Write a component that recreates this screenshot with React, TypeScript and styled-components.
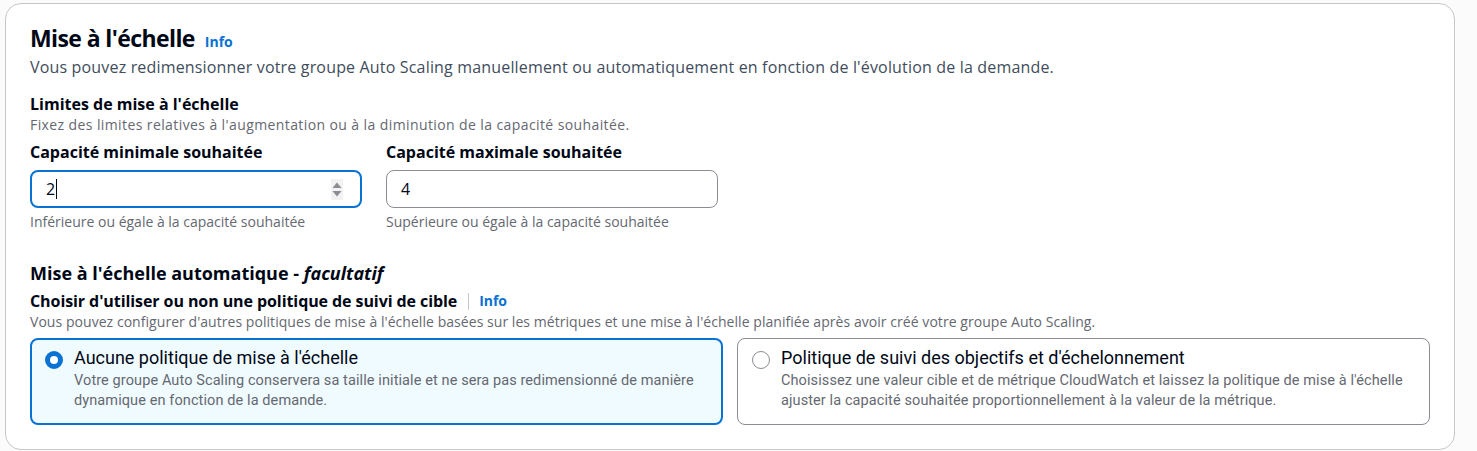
import React from "react";
import styled, { createGlobalStyle } from "styled-components";

const Global = createGlobalStyle`
  html, body { margin: 0; padding: 0; background: #fbfbfb; }
  body { font-family: "Open Sans", "Noto Sans", sans-serif; color: #000716; }
  * { box-sizing: border-box; }
`;

const Page = styled.div`
  padding: 3px 22px 0 5px;
`;

const Card = styled.section`
  background: #ffffff;
  border: 1px solid #c6c6cd;
  border-radius: 16px;
  height: 447px;
  padding: 19px 24px 0 24px;
`;

const TitleRow = styled.div`
  display: flex;
  align-items: baseline;
  gap: 10px;
`;

const Title = styled.h2`
  margin: 0;
  font-size: 23px;
  line-height: 30px;
  font-weight: 700;
  letter-spacing: -0.6px;
`;

const InfoLink = styled.a`
  color: #0972d3;
  font-size: 14px;
  font-weight: 700;
  text-decoration: none;
`;

const Lead = styled.p`
  margin: 3px 0 0;
  font-size: 16px;
  line-height: 22px;
  letter-spacing: 0.17px;
  color: #414d5c;
`;

const Label = styled.div<{ $size?: number; $top?: number; $ls?: number }>`
  font-size: ${(p) => p.$size ?? 16}px;
  line-height: ${(p) => ((p.$size ?? 16) > 16 ? 24 : 22)}px;
  margin-top: ${(p) => p.$top ?? 0}px;
  letter-spacing: ${(p) => p.$ls ?? 0}px;
  font-weight: 700;
  display: flex;
  align-items: center;
`;

const Desc = styled.div<{ $ls?: number }>`
  font-size: 14px;
  line-height: 20px;
  letter-spacing: ${(p) => p.$ls ?? 0}px;
  color: #656871;
`;

const Section = styled.div<{ $top: number }>`
  margin-top: ${(p) => p.$top}px;
`;

const Fields = styled.div`
  display: grid;
  grid-template-columns: 332px 332px;
  gap: 24px;
  margin-top: 6px;
`;

const Field = styled.div`
  display: flex;
  flex-direction: column;
`;

const InputBox = styled.div<{ $focused?: boolean }>`
  margin-top: 7px;
  height: 38px;
  border-radius: 8px;
  border: ${(p) => (p.$focused ? "2px solid #0972d3" : "1px solid #8c8c94")};
  padding: 0 ${(p) => (p.$focused ? 17 : 18)}px 0 14px;
  display: flex;
  align-items: center;
  font-size: 16px;
  background: #fff;
`;

const Value = styled.span`
  flex: 1;
  display: flex;
  align-items: center;
`;

const Caret = styled.span`
  display: inline-block;
  width: 1px;
  height: 20px;
  background: #000716;
  margin-left: 1px;
`;

const Spinner = styled.span`
  width: 12px;
  height: 21px;
  background: #f2f2f2;
  display: flex;
  align-items: center;
  justify-content: center;
`;

const Hint = styled.div`
  margin-top: 4px;
  font-size: 14px;
  line-height: 20px;
  color: #656871;
`;

const Divider = styled.span`
  display: inline-block;
  width: 1px;
  height: 17px;
  background: #c6c6cd;
  margin: 0 10px 0 11px;
`;

const Italic = styled.i`
  font-weight: 700;
`;

const Options = styled.div`
  display: grid;
  grid-template-columns: 1fr 1fr;
  gap: 14px;
  margin-top: 6px;
`;

const Option = styled.label<{ $checked?: boolean }>`
  display: flex;
  gap: 11px;
  height: 87px;
  border-radius: 8px;
  border: ${(p) => (p.$checked ? "2px solid #0972d3" : "1px solid #8c8c94")};
  background: ${(p) => (p.$checked ? "#f0fbff" : "#fff")};
  padding: ${(p) => (p.$checked ? "7px 13px" : "8px 14px")};
  font-family: Roboto, "Noto Sans", sans-serif;
`;

const Radio = styled.span<{ $checked?: boolean }>`
  flex: none;
  width: 18px;
  height: 18px;
  margin-top: 4px;
  border-radius: 50%;
  border: ${(p) => (p.$checked ? "5px solid #0972d3" : "1.5px solid #8c8c94")};
  background: #fff;
`;

const OptionText = styled.div`
  display: flex;
  flex-direction: column;
`;

const OptionTitle = styled.div`
  font-size: 18px;
  line-height: 22px;
  color: #000716;
`;

const OptionDesc = styled.div`
  margin-top: 2px;
  font-size: 14.5px;
  line-height: 20px;
  letter-spacing: 0.1px;
  color: #656871;
`;

export default function App() {
  return (
    <>
      <Global />
      <Page>
        <Card>
          <TitleRow>
            <Title>Mise à l'échelle</Title>
            <InfoLink href="#">Info</InfoLink>
          </TitleRow>
          <Lead>
            Vous pouvez redimensionner votre groupe Auto Scaling manuellement ou automatiquement en fonction de
            l'évolution de la demande.
          </Lead>

          <Section $top={15}>
            <Label>Limites de mise à l'échelle</Label>
            <Desc $ls={0.4}>
              Fixez des limites relatives à l'augmentation ou à la diminution de la capacité souhaitée.
            </Desc>
            <Fields>
              <Field>
                <Label>Capacité minimale souhaitée</Label>
                <InputBox $focused>
                  <Value>
                    2<Caret />
                  </Value>
                  <Spinner>
                    <svg width="10" height="19" viewBox="0 0 10 19">
                      <path d="M5 2.5 L9.5 8 L0.5 8 Z" fill="#8c8c94" />
                      <path d="M0.5 11 L9.5 11 L5 16.5 Z" fill="#8c8c94" />
                    </svg>
                  </Spinner>
                </InputBox>
                <Hint>Inférieure ou égale à la capacité souhaitée</Hint>
              </Field>
              <Field>
                <Label>Capacité maximale souhaitée</Label>
                <InputBox>
                  <Value>4</Value>
                </InputBox>
                <Hint>Supérieure ou égale à la capacité souhaitée</Hint>
              </Field>
            </Fields>
          </Section>

          <Section $top={29}>
            <Label $size={18}>
              Mise à l'échelle automatique -&nbsp;<Italic>facultatif</Italic>
            </Label>
            <Label $top={5} $ls={-0.08}>
              Choisir d'utiliser ou non une politique de suivi de cible
              <Divider />
              <InfoLink href="#">Info</InfoLink>
            </Label>
            <Desc $ls={0.05}>
              Vous pouvez configurer d'autres politiques de mise à l'échelle basées sur les métriques et une mise à
              l'échelle planifiée après avoir créé votre groupe Auto Scaling.
            </Desc>
            <Options>
              <Option $checked>
                <Radio $checked />
                <OptionText>
                  <OptionTitle>Aucune politique de mise à l'échelle</OptionTitle>
                  <OptionDesc>
                    Votre groupe Auto Scaling conservera sa taille initiale et ne sera pas redimensionné de manière
                    dynamique en fonction de la demande.
                  </OptionDesc>
                </OptionText>
              </Option>
              <Option>
                <Radio />
                <OptionText>
                  <OptionTitle>Politique de suivi des objectifs et d'échelonnement</OptionTitle>
                  <OptionDesc>
                    Choisissez une valeur cible et de métrique CloudWatch et laissez la politique de mise à l'échelle
                    ajuster la capacité souhaitée proportionnellement à la valeur de la métrique.
                  </OptionDesc>
                </OptionText>
              </Option>
            </Options>
          </Section>
        </Card>
      </Page>
    </>
  );
}
